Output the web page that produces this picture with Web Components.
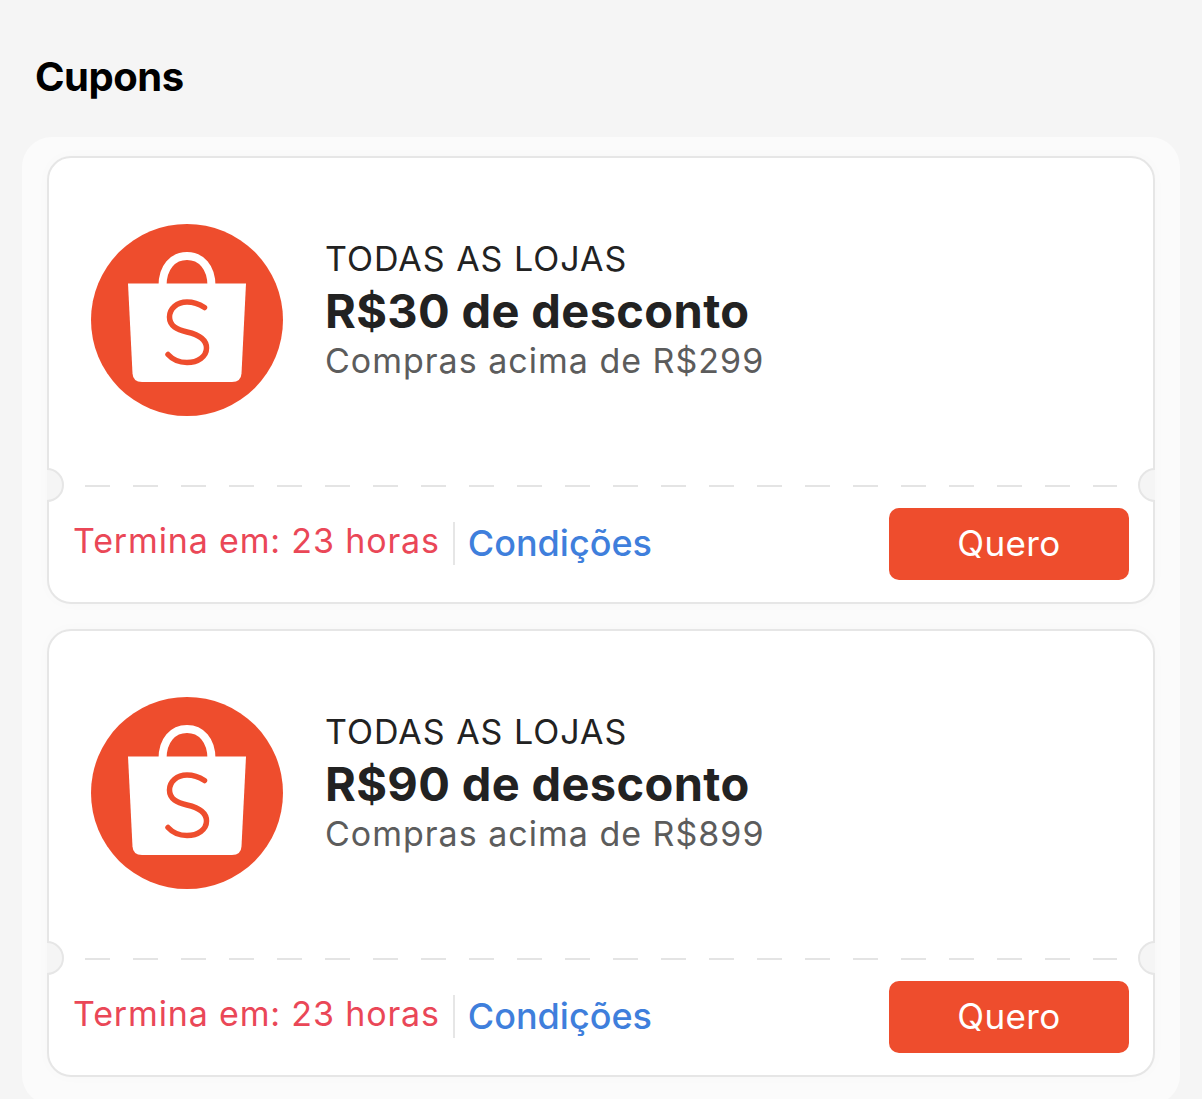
<!DOCTYPE html>
<html lang="pt-BR">
<head>
<meta charset="utf-8">
<title>Cupons</title>
<style>
  html, body { margin: 0; height: 1099px; overflow: hidden; }
  body { background: #f5f5f5; font-family: Inter, "Liberation Sans", sans-serif; }
</style>
</head>
<body>
<template id="logo-tpl">
  <style>
    :host { display: block; width: 192px; height: 192px; flex: none; }
    svg { display: block; }
  </style>
  <svg width="192" height="192" viewBox="0 0 192 192">
    <circle cx="96" cy="96" r="96" fill="#ee4d2d"/>
    <path d="M71.5 62C71.5 43 82 32 96 32s24.5 11 24.5 30" fill="none" stroke="#fff" stroke-width="8"/>
    <path d="M37 59.5H155L150.5 149.5Q150 158 141 158H51Q42 158 41.500 149.500Z" fill="#fff"/>
    <path d="M113.500 83.500C108 80 102 78 96 78C86 78 78.500 84.500 78.500 93C78.500 102 86 105.500 96 108C107 110.500 115.500 115 115.500 124C115.500 132.500 107 138.500 96 138.500C88 138.500 81.500 135.500 77 130.500" fill="none" stroke="#ee4d2d" stroke-width="5.500" stroke-linecap="round"/>
  </svg>
</template>

<template id="coupon-tpl">
  <style>
    :host { display: block; position: relative; box-sizing: border-box; height: 448px; background: #fff; border: 2px solid #e6e6e6; border-radius: 24px; box-shadow: 0 0 14px rgba(0,0,0,.018); }
    .top { height: 327px; box-sizing: border-box; padding: 66px 0 0 42px; display: flex; gap: 42px; }
    .info { padding-top: 9px; }
    .scope { font-size: 34px; line-height: 51px; color: #222; letter-spacing: 1px; }
    .title { font-size: 47px; line-height: 54px; font-weight: 700; color: #222; letter-spacing: .35px; }
    .min { font-size: 34px; line-height: 46px; color: #5c5c5c; letter-spacing: 1px; }
    .dash { height: 2px; margin: 0 36px; background: repeating-linear-gradient(90deg, #e4e4e4 0 25px, transparent 25px 48px); }
    .notch { position: absolute; top: 310px; width: 34px; height: 34px; box-sizing: border-box; border-radius: 50%; background: #f5f5f5; border: 2px solid #e6e6e6; }
    .notch.l { left: -19px; clip-path: inset(-1px -1px -1px 50%); }
    .notch.r { right: -19px; clip-path: inset(-1px 50% -1px -1px); }
    .foot { display: flex; align-items: center; padding: 21px 24px 0 24px; }
    .ends { font-size: 34px; color: #ea4757; padding: 0 13px 8px 0; letter-spacing: .85px; line-height: 43px; }
    .sep { width: 2px; height: 43px; background: #e6e6e6; flex: none; margin-bottom: 2px; }
    .terms { font-size: 36px; font-weight: 500; color: #3f7fdc; padding: 0 0 2px 13px; flex: 1; line-height: 43px; }
    ::slotted(coupon-button) { flex: none; }
  </style>
  <span class="notch l"></span><span class="notch r"></span>
  <div class="top">
    <shop-logo></shop-logo>
    <div class="info">
      <div class="scope"><slot name="scope"></slot></div>
      <div class="title"><slot name="title"></slot></div>
      <div class="min"><slot name="min"></slot></div>
    </div>
  </div>
  <div class="dash"></div>
  <div class="foot">
    <div class="ends"><slot name="ends"></slot></div>
    <span class="sep"></span>
    <div class="terms"><slot name="terms"></slot></div>
    <slot name="action"></slot>
  </div>
</template>

<template id="button-tpl">
  <style>
    :host { display: flex; align-items: center; justify-content: center; box-sizing: border-box; width: 240px; height: 72px; padding-bottom: 2px; background: #ee4d2d; border-radius: 10px; color: #fff; font-size: 35px; letter-spacing: .4px; cursor: pointer; }
  </style>
  <slot></slot>
</template>

<template id="panel-tpl">
  <style>
    :host { display: block; }
    h2 { margin: 0; font-size: 40px; line-height: 46px; font-weight: 700; color: #000; letter-spacing: -.5px; padding: 54px 0 37px 35px; }
    .box { margin: 0 22px; padding: 19px 25px 28px; background: #fbfbfb; border-radius: 30px; display: flex; flex-direction: column; gap: 25px; }
  </style>
  <h2><slot name="heading"></slot></h2>
  <div class="box"><slot></slot></div>
</template>

<coupon-panel>
  <span slot="heading">Cupons</span>
  <coupon-card>
    <span slot="scope">TODAS AS LOJAS</span>
    <span slot="title">R$30 de desconto</span>
    <span slot="min">Compras acima de R$299</span>
    <span slot="ends">Termina em: 23 horas</span>
    <span slot="terms">Condições</span>
    <coupon-button slot="action">Quero</coupon-button>
  </coupon-card>
  <coupon-card>
    <span slot="scope">TODAS AS LOJAS</span>
    <span slot="title">R$90 de desconto</span>
    <span slot="min">Compras acima de R$899</span>
    <span slot="ends">Termina em: 23 horas</span>
    <span slot="terms">Condições</span>
    <coupon-button slot="action">Quero</coupon-button>
  </coupon-card>
</coupon-panel>

<script>
  // every element just clones its template into an open shadow root
  function fromTemplate(id) {
    return class extends HTMLElement {
      constructor() {
        super();
        this.attachShadow({ mode: "open" });
        this.shadowRoot.appendChild(document.getElementById(id).content.cloneNode(true));
      }
    };
  }
  customElements.define("shop-logo", fromTemplate("logo-tpl"));
  customElements.define("coupon-button", fromTemplate("button-tpl"));
  customElements.define("coupon-card", fromTemplate("coupon-tpl"));
  customElements.define("coupon-panel", fromTemplate("panel-tpl"));
</script>
</body>
</html>
